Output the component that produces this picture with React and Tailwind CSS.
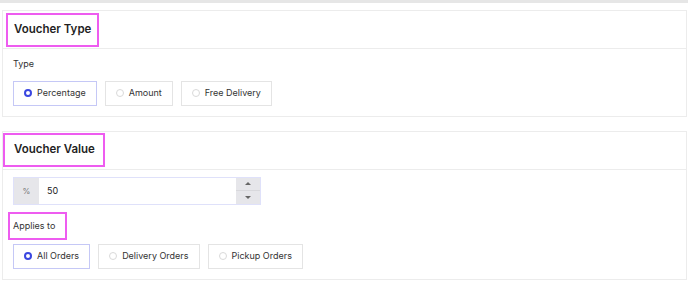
import React from "react";

const Radio = ({ label, checked }) => (
  <div
    className={`flex items-center gap-[5px] h-[25px] pl-[10px] pr-[10px] border ${
      checked ? "border-[#c5c8f6]" : "border-[#e4e4e4]"
    }`}
  >
    {checked ? (
      <span className="w-[8px] h-[8px] rounded-full border-[2.5px] border-[#3b47e0] bg-white" />
    ) : (
      <span className="w-[8px] h-[8px] rounded-full border border-[#d9d9d9] bg-white" />
    )}
    <span className="text-[9px] text-[#333] whitespace-nowrap">{label}</span>
  </div>
);

const Card = ({ title, titleBox, children }) => (
  <div className="border border-[#ececec] bg-white">
    <div className="h-[38px] border-b border-[#ececec] flex items-center">
      <div className={`border-2 border-[#ee5cf0] h-[34px] flex items-center ${titleBox}`}>
        <h2 className="text-[11.5px] font-semibold text-[#1f1f1f] whitespace-nowrap">{title}</h2>
      </div>
    </div>
    {children}
  </div>
);

export default function App() {
  return (
    <div className="w-[688px] h-[284px] bg-white overflow-hidden" style={{ fontFamily: "Inter, 'Noto Sans', sans-serif" }}>
      <div className="h-[3px] bg-[#e6e6e6]" />
      <div className="pl-[2px] pr-[1px] pt-[7px]">
        <Card title="Voucher Type" titleBox="ml-[3px] pl-[6px] w-[93px]">
          <div className="px-[10px] pt-[8px] pb-[10px]">
            <p className="text-[9px] text-[#333] mb-[10px]">Type</p>
            <div className="flex gap-[8px]">
              <Radio label="Percentage" checked />
              <Radio label="Amount" />
              <Radio label="Free Delivery" />
            </div>
          </div>
        </Card>

        <div className="h-[14px]" />

        <Card title="Voucher Value" titleBox="pl-[9px] w-[102px]">
          <div className="px-[10px] pt-[7px] pb-[10px]">
            <div className="flex w-[248px] h-[28px] border border-[#dfe1fa]">
              <div className="w-[25px] bg-[#e6e6ea] flex items-center justify-center text-[8px] text-[#777]">%</div>
              <div className="flex-1 flex items-center pl-[8px] text-[9px] text-[#222]">50</div>
              <div className="w-[24px] bg-[#e6e6ea] flex flex-col">
                <div className="flex-1 flex items-center justify-center border-b border-[#d8d8dc]">
                  <span className="w-0 h-0 border-l-[3px] border-r-[3px] border-b-[3px] border-l-transparent border-r-transparent border-b-[#666]" />
                </div>
                <div className="flex-1 flex items-center justify-center">
                  <span className="w-0 h-0 border-l-[3px] border-r-[3px] border-t-[3px] border-l-transparent border-r-transparent border-t-[#666]" />
                </div>
              </div>
            </div>
            <div className="mt-[7px] -ml-[5px] w-[59px] h-[28px] border-2 border-[#ee5cf0] flex items-center pl-[3px]">
              <span className="text-[9px] text-[#333]">Applies to</span>
            </div>
            <div className="flex gap-[8px] mt-[4px]">
              <Radio label="All Orders" checked />
              <Radio label="Delivery Orders" />
              <Radio label="Pickup Orders" />
            </div>
          </div>
        </Card>
      </div>
    </div>
  );
}
